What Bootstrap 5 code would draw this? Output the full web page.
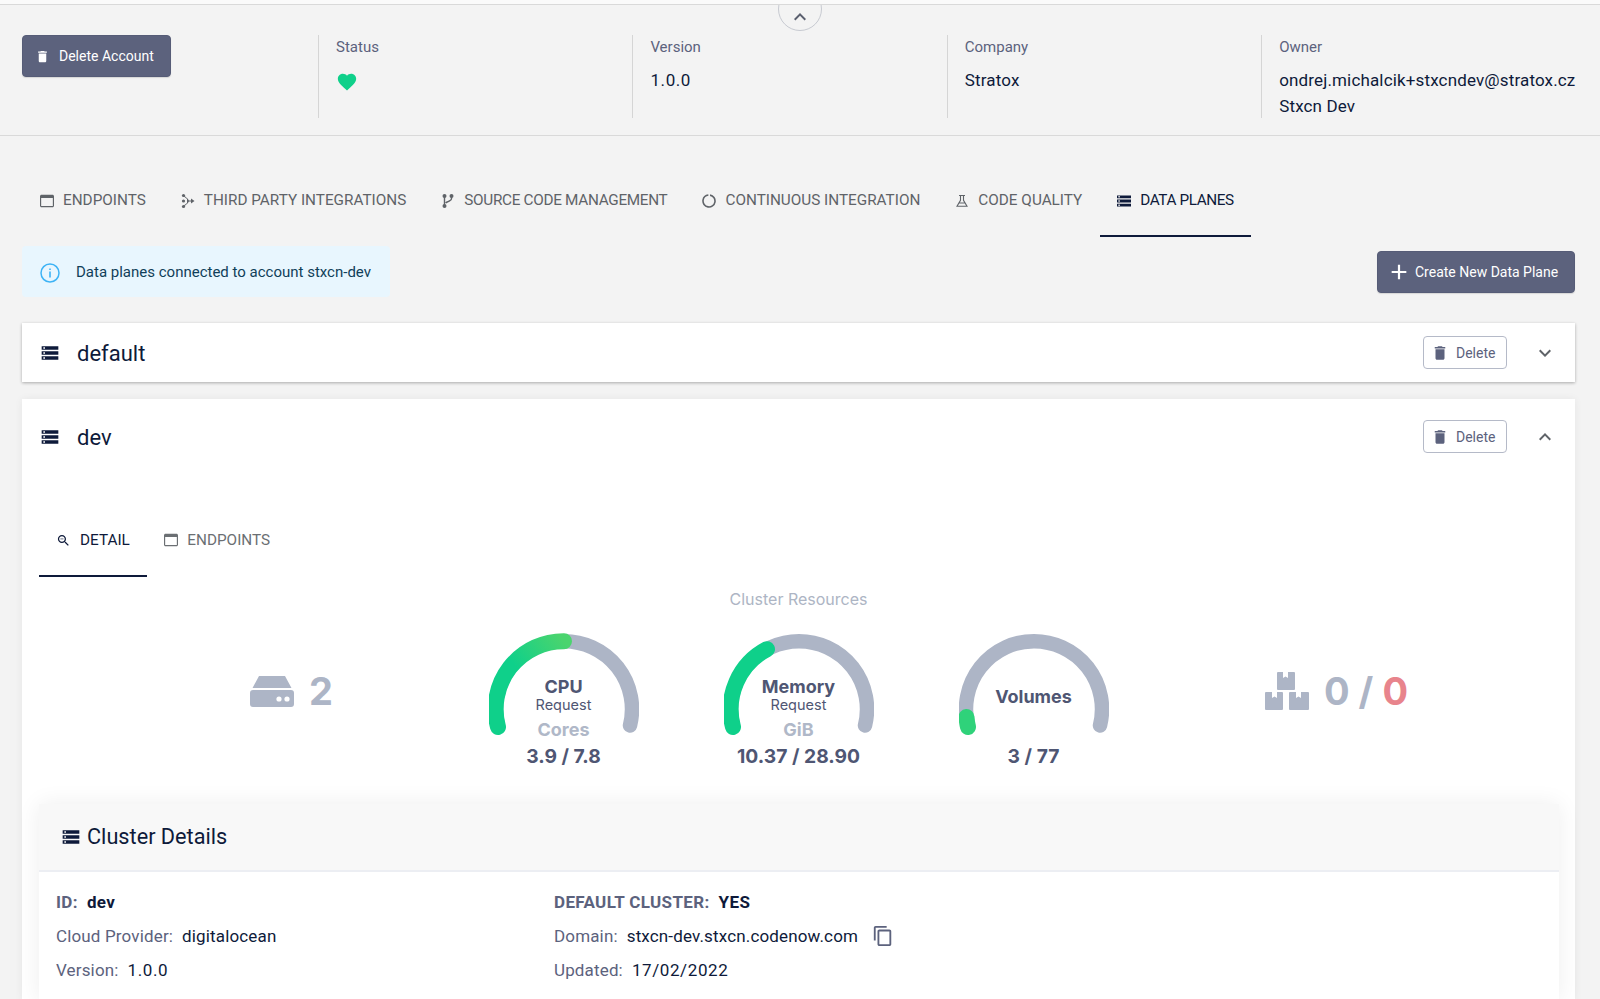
<!doctype html>
<html lang="en"><head><meta charset="utf-8"><title>Data planes</title>
<link href="https://cdn.jsdelivr.net/npm/bootstrap@5.3.0/dist/css/bootstrap.min.css" rel="stylesheet">
<style>
html,body{height:999px;overflow:hidden}
body{background:#f3f3f3;font-family:"Roboto","Noto Sans",sans-serif;color:#0e1a3a;font-size:16px}
svg{fill:currentColor;flex:none;display:block}
.topline{height:5px;background:#fafafa;border-bottom:1px solid #d9d9d9;position:relative;z-index:2}
.collapser{width:44px;height:44px;margin:-18px auto -26px;border:1px solid #c7cad1;border-radius:50%;background:#f3f3f3;color:#5a5f6e;padding-bottom:1px;z-index:1}
.hdr{height:131px;border-bottom:1px solid #d9d9d9;padding-top:30px}
.hdr-left{width:318px;padding-left:22px}
.btn-slate{background:#5c627d;border:1px solid #565c77;color:#fff;font-size:14px;height:42px;padding:0 16px 0 12px;border-radius:4px;gap:9px;box-shadow:0 1px 1px rgba(0,0,0,.12)}
.btn-slate:hover{background:#5c627d;color:#fff}
.hcol{width:314.4px;height:83px;border-left:1px solid #d5d5d5;padding-left:17px;padding-top:3px}
.hlabel{color:#5c627d;font-size:15px;line-height:18px;margin-bottom:11px}
.hval{font-size:17px;letter-spacing:.15px;line-height:26px;color:#0e1a3a}
.hnum{letter-spacing:.6px}
.heartic{color:#0fd08a;margin-top:15px}
.tabbar{padding-left:22.500px;margin-top:36px;height:65px}
.tabitem{height:65px;padding:0 17.500px 6px;gap:9px;font-size:15.300px;color:#5f6368;border-bottom:2px solid transparent;text-transform:uppercase}
.tabitem.on{color:#0e1a3a;border-bottom-color:#0e1a3a;letter-spacing:-.4px}
.tab-tight{letter-spacing:-.3px}
.actions{padding:9px 25px 0 22px;height:86px}
.infobox{background:#e8f6fe;height:51px;width:368px;padding-left:18px;padding-top:2px;gap:16px;color:#103f5a;font-size:15px;border-radius:4px}
.btn-create{width:198px;height:42px;margin-top:5px;padding:0 0 0 10px;gap:5px;justify-content:flex-start}
.plane{background:#fff;margin:0 25px 0 22px;box-shadow:0 1px 3px rgba(0,0,0,.3)}
.plane-open{box-shadow:0 0 8px rgba(0,0,0,.06);margin-top:17px;padding-top:8px}
.planehead{height:59px;padding-left:18px;padding-right:18px}
.planename{font-size:22px;margin-left:17px;line-height:30px;padding-top:2px}
.btn-del{width:84px;height:33px;border:1px solid #b5bac8;border-radius:4px;background:#fff;color:#5c627d;font-size:14px;padding:1px 0 0 7px;gap:7px;margin-right:26px}
.chev{color:#5f6368}
.subtabs{padding-left:17px;margin-top:39px}
.subtab{height:72px;padding:0 17.500px;gap:9px;font-size:15.300px;color:#6b6f73;border-bottom:2px solid transparent}
.subtab.on{color:#0e1a3a;border-bottom-color:#0e1a3a;padding:0 17px}
.restitle{text-align:center;color:#adb5c4;line-height:22px;margin-top:11px;font-family:"Inter",sans-serif;font-size:16px}
.gaugerow{margin:22px 0 0 17px;height:144px;font-family:"Inter",sans-serif}
.sideleft{width:407px;padding:31px 113px 0 0;justify-content:flex-end;gap:15px;height:87px}
.sideright{width:407px;padding:31px 0 0 114px;gap:15px;height:87px}
.bignum{font-weight:700;font-size:38px;line-height:44px;color:#adb5c6}
.bignum em{font-style:normal;color:#e8848c}
.gauge{width:235px;display:grid;justify-items:center;align-content:start}
.gauge>*{grid-area:1/1}
.gtext{width:150px;text-align:center;color:#4f5673;padding-top:44px}
.gtitle{font-weight:700;font-size:18px;line-height:21px}
.gtitle-solo{padding-top:10px}
.greq{font-size:14.500px;line-height:16px}
.gunit{font-weight:700;font-size:18px;line-height:22px;color:#b0b8c8;margin-top:5.500px}
.gnum{font-weight:700;font-size:19.300px;line-height:24px;margin-top:3px;white-space:nowrap}
.gnum-solo{margin-top:37px}
.details{margin:28px 16px 0 17px;box-shadow:0 0 22px rgba(0,0,0,.07);background:#fff}
.dethead{height:68px;background:#f8f8f8;border-bottom:2px solid #eceef3;padding-left:22px;gap:6px;font-size:21.700px}
.detbody{padding:13px 0 0 17px;font-size:17px;letter-spacing:.15px;line-height:34px;height:129px}
.dcol{width:498px}
.dl{color:#5c627d;margin-right:9px}
.dv{color:#0e1a3a}
.dbold{font-weight:700;letter-spacing:.35px}
.dnum{letter-spacing:.6px}
.copyic{color:#5c627d;margin-left:14px}
</style></head><body>
<div class="topline"></div>
<div class="d-flex justify-content-center position-relative"><div class="collapser position-relative d-flex align-items-end justify-content-center">
<svg width="24" height="24" viewBox="0 0 24 24"><path d="M7.410 15.410 12 10.830l4.590 4.580L18 14l-6-6-6 6z"/></svg></div></div>
<div class="hdr d-flex">
 <div class="hdr-left"><button class="btn btn-slate d-inline-flex align-items-center" type="button"><svg width="15" height="15" viewBox="0 0 24 24"><path d="M6 19c0 1.100.9 2 2 2h8c1.100 0 2-.9 2-2V7H6v12zM19 4h-3.500l-1-1h-5l-1 1H5v2h14V4z"/></svg>Delete Account</button></div>
 <div class="hcol"><div class="hlabel">Status</div><svg class="heartic" width="22" height="22" viewBox="0 0 24 24"><path d="M12 21.350l-1.450-1.320C5.400 15.360 2 12.280 2 8.500 2 5.420 4.420 3 7.500 3c1.740 0 3.410.81 4.500 2.090C13.090 3.810 14.760 3 16.500 3 19.580 3 22 5.420 22 8.500c0 3.780-3.400 6.860-8.550 11.540L12 21.350z"/></svg></div>
 <div class="hcol"><div class="hlabel">Version</div><div class="hval hnum">1.0.0</div></div>
 <div class="hcol"><div class="hlabel">Company</div><div class="hval">Stratox</div></div>
 <div class="hcol"><div class="hlabel">Owner</div><div class="hval">ondrej.michalcik+stxcndev@stratox.cz</div><div class="hval">Stxcn Dev</div></div>
</div>
<div class="tabbar d-flex">
 <div class="tabitem d-flex align-items-center"><svg width="14" height="14" viewBox="3 4 18 16"><path d="M19 4H5c-1.100 0-2 .9-2 2v12c0 1.100.9 2 2 2h14c1.100 0 2-.9 2-2V6c0-1.100-.9-2-2-2zm0 14.500H4.500V8h15v10.500z"/></svg>Endpoints</div>
 <div class="tabitem d-flex align-items-center"><svg width="14" height="16" viewBox="0 0 14 16"><circle cx="2.500" cy="2.500" r="1.600"/><circle cx="2.500" cy="13.500" r="1.600"/><circle cx="2.500" cy="8" r="1.600"/><path d="M2.500 2l4.500 4 1 2-1 2-4.500 4-.6-.8L6 10V6L1.900 2.800z"/><path d="M6 7.400h5v1.200H6zM10 5.500l3.500 2.500-3.500 2.500z"/></svg>Third Party Integrations</div>
 <div class="tabitem tab-tight d-flex align-items-center"><svg width="14" height="16" viewBox="0 0 14 16"><circle cx="3.500" cy="3" r="2"/><circle cx="3.500" cy="13" r="2"/><circle cx="10.500" cy="3" r="2"/><path d="M2.800 3h1.400v10H2.800zM9.800 3h1.400v2.500c0 2.500-4 3.500-6 5l-1-1.200c2-1.500 5.600-2 5.600-3.800z"/></svg>Source Code Management</div>
 <div class="tabitem d-flex align-items-center"><svg width="14" height="16" viewBox="0 0 14 16"><circle cx="7" cy="8" r="6" fill="none" stroke="currentColor" stroke-width="1.600" stroke-dasharray="35 2.700" transform="rotate(-80 7 8)"/></svg>Continuous Integration</div>
 <div class="tabitem d-flex align-items-center"><svg width="14" height="14" viewBox="0 0 14 14"><path d="M4 1.500h6M5.500 1.500v4.800L2 12.300h10L8.500 6.300V1.500M4 9h6" fill="none" stroke="currentColor" stroke-width="1.100"/></svg>Code Quality</div>
 <div class="tabitem on d-flex align-items-center"><svg width="14" height="14" viewBox="2 4 20 16"><path d="M2 20h20v-4H2v4zm2-3h2v2H4v-2zM2 4v4h20V4H2zm4 3H4V5h2v2zm-4 7h20v-4H2v4zm2-3h2v2H4v-2z"/></svg>Data Planes</div>
</div>
<div class="actions d-flex justify-content-between align-items-start">
 <div class="infobox d-flex align-items-center"><svg width="20" height="20" viewBox="0 0 20 20" style="color:#3db3f5"><circle cx="10" cy="10" r="9" fill="none" stroke="currentColor" stroke-width="1.500"/><path d="M9.200 8.500h1.600v6H9.200zM9.200 5.500h1.600v1.600H9.200z"/></svg>Data planes connected to account stxcn-dev</div>
 <button class="btn btn-slate btn-create d-inline-flex align-items-center" type="button"><svg width="22" height="22" viewBox="0 0 24 24"><path d="M20 13.200h-6.800V20h-2.400v-6.800H4v-2.400h6.800V4h2.400v6.800H20z"/></svg>Create New Data Plane</button>
</div>
<div class="plane">
 <div class="planehead d-flex align-items-center"><svg width="20" height="20" viewBox="0 0 24 24"><path d="M2 20h20v-4H2v4zm2-3h2v2H4v-2zM2 4v4h20V4H2zm4 3H4V5h2v2zm-4 7h20v-4H2v4zm2-3h2v2H4v-2z"/></svg><span class="planename flex-grow-1">default</span>
 <button class="btn btn-del d-inline-flex align-items-center" type="button"><svg width="18" height="18" viewBox="0 0 24 24"><path d="M6 19c0 1.100.9 2 2 2h8c1.100 0 2-.9 2-2V7H6v12zM19 4h-3.500l-1-1h-5l-1 1H5v2h14V4z"/></svg>Delete</button>
 <svg class="chev" width="24" height="24" viewBox="0 0 24 24"><path d="M16.590 8.590 12 13.170 7.410 8.590 6 10l6 6 6-6z"/></svg></div>
</div>
<div class="plane plane-open">
 <div class="planehead d-flex align-items-center"><svg width="20" height="20" viewBox="0 0 24 24"><path d="M2 20h20v-4H2v4zm2-3h2v2H4v-2zM2 4v4h20V4H2zm4 3H4V5h2v2zm-4 7h20v-4H2v4zm2-3h2v2H4v-2z"/></svg><span class="planename flex-grow-1">dev</span>
 <button class="btn btn-del d-inline-flex align-items-center" type="button"><svg width="18" height="18" viewBox="0 0 24 24"><path d="M6 19c0 1.100.9 2 2 2h8c1.100 0 2-.9 2-2V7H6v12zM19 4h-3.500l-1-1h-5l-1 1H5v2h14V4z"/></svg>Delete</button>
 <svg class="chev" width="24" height="24" viewBox="0 0 24 24"><path d="M7.410 15.410 12 10.830l4.590 4.580L18 14l-6-6-6 6z"/></svg></div>
 <div class="subtabs d-flex">
  <div class="subtab on d-flex align-items-center"><svg width="15" height="15" viewBox="0 0 24 24"><path d="M15.500 14h-.79l-.28-.27C15.410 12.590 16 11.110 16 9.500 16 5.910 13.090 3 9.500 3S3 5.910 3 9.500 5.910 16 9.500 16c1.610 0 3.090-.59 4.230-1.570l.27.28v.79l5 4.990L20.490 19l-4.990-5zm-6 0C7.010 14 5 11.990 5 9.500S7.010 5 9.500 5 14 7.010 14 9.500 11.990 14 9.500 14z"/><path d="M7 9h5v1H7z"/></svg>DETAIL</div>
  <div class="subtab d-flex align-items-center"><svg width="14" height="14" viewBox="3 4 18 16"><path d="M19 4H5c-1.100 0-2 .9-2 2v12c0 1.100.9 2 2 2h14c1.100 0 2-.9 2-2V6c0-1.100-.9-2-2-2zm0 14.500H4.500V8h15v10.500z"/></svg>ENDPOINTS</div>
 </div>
 <div class="restitle">Cluster Resources</div>
 <div class="gaugerow d-flex">
  <div class="sideleft d-flex align-items-center"><svg width="44" height="32" viewBox="0 0 44 32" style="color:#adb5c6"><path d="M9 1h26l6.500 12H2.500zM3 15h38a3 3 0 0 1 3 3v11a3 3 0 0 1-3 3H3a3 3 0 0 1-3-3V18a3 3 0 0 1 3-3z"/><circle cx="29" cy="24" r="2.600" fill="#fff"/><circle cx="37" cy="24" r="2.600" fill="#fff"/></svg><span class="bignum">2</span></div>
  <div class="gauge">
   <svg width="150" height="110" viewBox="0 0 150 110" style="fill:none"><defs><linearGradient id="gc" x1="0" y1="1" x2="1" y2="0"><stop offset="0.500" stop-color="#0fd08a"/><stop offset="1" stop-color="#4ad46e"/></linearGradient></defs><path d="M9 93.500A68 68 0 1 1 141 93.500" stroke="#adb5c6" stroke-width="14.500" stroke-linecap="round"/><path d="M9 95A68 68 0 0 1 75 9.200" stroke="url(#gc)" stroke-width="16" stroke-linecap="round"/></svg>
   <div class="gtext"><div class="gtitle">CPU</div><div class="greq">Request</div><div class="gunit">Cores</div><div class="gnum">3.9 / 7.8</div></div>
  </div>
  <div class="gauge">
   <svg width="150" height="110" viewBox="0 0 150 110" style="fill:none"><path d="M9 93.500A68 68 0 1 1 141 93.500" stroke="#adb5c6" stroke-width="14.500" stroke-linecap="round"/><path d="M9 95A68 68 0 0 1 43 17.200" stroke="#0fd08a" stroke-width="16" stroke-linecap="round"/></svg>
   <div class="gtext"><div class="gtitle">Memory</div><div class="greq">Request</div><div class="gunit">GiB</div><div class="gnum">10.37 / 28.90</div></div>
  </div>
  <div class="gauge">
   <svg width="150" height="110" viewBox="0 0 150 110" style="fill:none"><path d="M9 93.500A68 68 0 1 1 141 93.500" stroke="#adb5c6" stroke-width="14.500" stroke-linecap="round"/><path d="M9 95A68 68 0 0 1 7.500 85" stroke="#2fd27a" stroke-width="16" stroke-linecap="round"/></svg>
   <div class="gtext"><div class="gtitle gtitle-solo">Volumes</div><div class="gnum gnum-solo">3 / 77</div></div>
  </div>
  <div class="sideright d-flex align-items-center"><svg width="44" height="40" viewBox="0 0 44 40" style="color:#adb5c6"><path d="M13 1h5v6l2.500-1.500L23 7V1h6a1 1 0 0 1 1 1v16a1 1 0 0 1-1 1H13a1 1 0 0 1-1-1V2a1 1 0 0 1 1-1zM1 21h6v6l2.500-1.500L12 27v-6h5a1 1 0 0 1 1 1v16a1 1 0 0 1-1 1H1a1 1 0 0 1-1-1V22a1 1 0 0 1 1-1zM25 21h6v6l2.500-1.500L36 27v-6h7a1 1 0 0 1 1 1v16a1 1 0 0 1-1 1H25a1 1 0 0 1-1-1V22a1 1 0 0 1 1-1z"/></svg><span class="bignum">0 / <em>0</em></span></div>
 </div>
 <div class="details">
  <div class="dethead d-flex align-items-center"><svg width="20" height="20" viewBox="0 0 24 24"><path d="M2 20h20v-4H2v4zm2-3h2v2H4v-2zM2 4v4h20V4H2zm4 3H4V5h2v2zm-4 7h20v-4H2v4zm2-3h2v2H4v-2z"/></svg>Cluster Details</div>
  <div class="detbody d-flex">
   <div class="dcol"><div><span class="dl dbold">ID:</span><span class="dv dbold">dev</span></div><div><span class="dl">Cloud Provider:</span><span class="dv">digitalocean</span></div><div><span class="dl">Version:</span><span class="dv dnum">1.0.0</span></div></div>
   <div><div><span class="dl dbold">DEFAULT CLUSTER:</span><span class="dv dbold">YES</span></div><div class="d-flex align-items-center"><span class="dl">Domain:</span><span class="dv">stxcn-dev.stxcn.codenow.com</span><svg class="copyic" width="22" height="22" viewBox="0 0 24 24"><path d="M16 1H4c-1.100 0-2 .9-2 2v14h2V3h12V1zm3 4H8c-1.100 0-2 .9-2 2v14c0 1.100.9 2 2 2h11c1.100 0 2-.9 2-2V7c0-1.100-.9-2-2-2zm0 16H8V7h11v14z"/></svg></div><div><span class="dl">Updated:</span><span class="dv dnum">17/02/2022</span></div></div>
  </div>
 </div>
</div>
<script src="https://cdn.jsdelivr.net/npm/bootstrap@5.3.0/dist/js/bootstrap.bundle.min.js"></script>
</body></html>
